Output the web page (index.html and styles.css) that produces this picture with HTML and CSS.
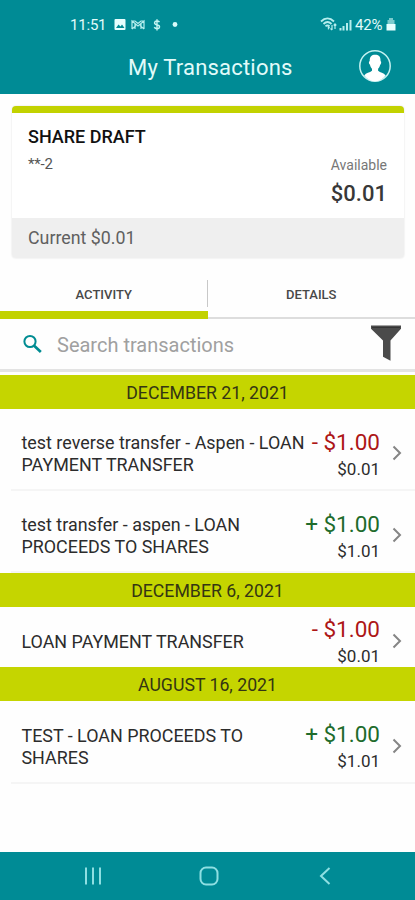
FILE: index.html
```html
<!DOCTYPE html>
<html lang="en">
<head>
<meta charset="utf-8">
<meta name="viewport" content="width=device-width, initial-scale=1">
<title>My Transactions</title>
<link rel="stylesheet" href="styles.css">
</head>
<body>
<header class="header">
  <div class="status">
    <span class="time">11:51</span>
    <svg class="notifications" width="66" height="14" viewBox="0 0 66 14" fill="none">
      <rect x="0.500" y="1" width="11" height="11" rx="1" fill="#e6ffff"/>
      <path d="M2 10l2.500-3.500 2 2 1.500-2 2.500 3.500z" fill="#008b95"/>
      <path d="M18 11V3l6 5 6-5v8M18 11l4-3.500M30 11l-4-3.500M18 3h3l3 2.500L27 3h3M21 5v6M27 5v6" stroke="#b5eeee" stroke-width="1.200"/>
      <path d="M45.500 4.200c-.6-.8-1.300-1.200-2.500-1.200-3 0-3.300 3.100-.5 3.700l1 .3c3 .7 2.500 3.700-.5 3.700-1.200 0-2.100-.5-2.800-1.400M43 1.200v11.300" stroke="#c5f5f3" stroke-width="1.400"/>
      <circle cx="61" cy="6.500" r="2.400" fill="#d8fcfa"/>
    </svg>
    <svg class="signal" width="33" height="16" viewBox="0 0 33 16" fill="none" stroke="#b5eeee">
      <path d="M1 4.500c4-4 9-4 13 0M3.500 7c2.500-2.500 5.500-2.500 8 0M5.500 9.300c1.200-1.200 2.800-1.200 4 0" stroke-width="1.800"/>
      <path d="M7.500 8l2.500 2.500-2 2.500z" fill="#b5eeee" stroke="none"/>
      <path d="M12 8v5M15 7v5M10.500 11.500l1.500 1.500M13.700 8.500L15 7l1.300 1.500" stroke-width="1.200"/>
      <path d="M20.500 11v2.500M23.500 9v4.500M27 6v7.500M30.500 3v10.500" stroke-width="2"/>
    </svg>
    <span class="percent">42%</span>
    <svg width="10" height="13" viewBox="0 0 10 13">
      <path d="M3 0h4v2h1.500v4h-7V2H3z" fill="#7acbcd"/>
      <path d="M.5 6h9v6.500h-9z" fill="#e8ffff"/>
    </svg>
  </div>
  <div class="titlebar">
    <h1>My Transactions</h1>
    <svg class="avatar" width="34" height="34" viewBox="0 0 34 34">
      <circle cx="17" cy="17" r="15.200" fill="none" stroke="#c4f2f1" stroke-width="1.500"/>
      <path d="M11.700 12.200C11.600 7.500 13.600 5.700 17.200 5.700s5.700 2 5.300 6.500c1.100.1.700 2.900-.3 3.500-.5 2-1.200 3.100-2.100 4v2.100c2.100 1.900 5.600 2 7.600 4.600-5.700 7.700-15.700 7.700-21.500 0 1.800-2.500 5.600-2.700 7.800-4.600v-2.100c-1-.9-1.700-2.100-2-4-1.200-.6-1.500-3.400-.3-3.500z" fill="#fff"/>
    </svg>
  </div>
</header>
<main>
  <section class="card">
    <div class="card-body">
      <div class="account"><h2>SHARE DRAFT</h2><p>**-2</p></div>
      <div class="available"><span>Available</span><strong>$0.01</strong></div>
    </div>
    <div class="card-foot">Current $0.01</div>
  </section>
  <nav class="tabs">
    <div class="tab active"><span>ACTIVITY</span></div>
    <div class="tab"><span>DETAILS</span></div>
  </nav>
  <div class="search">
    <svg width="20" height="20" viewBox="0 0 20 20" fill="none" stroke="#008c92">
      <circle cx="8" cy="7.500" r="5.600" stroke-width="2"/>
      <path d="M12.200 11.700l6.600 6.300" stroke-width="2.700"/>
    </svg>
    <span class="placeholder">Search transactions</span>
    <svg class="filter" width="32" height="36" viewBox="0 0 32 36">
      <path d="M1 .5h30v3.200L20.500 15.500v20.300l-7.500-4V15.500L1 3.700z" fill="#4b4b4b"/>
      <path d="M2 2.500h28" stroke="#343434"/>
    </svg>
  </div>
  <h3 class="date">DECEMBER 21, 2021</h3>
  <article class="row">
    <p class="desc">test reverse transfer - Aspen - LOAN<br>PAYMENT TRANSFER</p>
    <div class="money"><span class="amount debit">- $1.00</span><span class="balance">$0.01</span></div>
    <svg class="chevron" width="10" height="16" viewBox="0 0 10 16"><path d="M1.500 1.500L8 8l-6.500 6.500"/></svg>
  </article>
  <article class="row">
    <p class="desc">test transfer - aspen - LOAN<br>PROCEEDS TO SHARES</p>
    <div class="money"><span class="amount credit">+ $1.00</span><span class="balance">$1.01</span></div>
    <svg class="chevron" width="10" height="16" viewBox="0 0 10 16"><path d="M1.500 1.500L8 8l-6.500 6.500"/></svg>
  </article>
  <h3 class="date">DECEMBER 6, 2021</h3>
  <article class="row short">
    <p class="desc">LOAN PAYMENT TRANSFER</p>
    <div class="money"><span class="amount debit">- $1.00</span><span class="balance">$0.01</span></div>
    <svg class="chevron" width="10" height="16" viewBox="0 0 10 16"><path d="M1.500 1.500L8 8l-6.500 6.500"/></svg>
  </article>
  <h3 class="date">AUGUST 16, 2021</h3>
  <article class="row">
    <p class="desc">TEST - LOAN PROCEEDS TO<br>SHARES</p>
    <div class="money"><span class="amount credit">+ $1.00</span><span class="balance">$1.01</span></div>
    <svg class="chevron" width="10" height="16" viewBox="0 0 10 16"><path d="M1.500 1.500L8 8l-6.500 6.500"/></svg>
  </article>
</main>
<footer class="navbar">
  <svg width="18" height="20" viewBox="0 0 18 20"><path d="M2 1.500v17M9 1.500v17M16 1.500v17"/></svg>
  <svg class="home" width="20" height="20" viewBox="0 0 20 20"><rect x="1.500" y="1.500" width="17" height="17" rx="5.500"/></svg>
  <svg width="12" height="20" viewBox="0 0 12 20"><path d="M10.500 2L2 10l8.500 8"/></svg>
</footer>
</body>
</html>
```
FILE: styles.css
```css
* { box-sizing: border-box; }
body {
  margin: 0;
  height: 900px;
  display: flex;
  flex-direction: column;
  overflow: hidden;
  background: #fefefe;
  color: #2c2c2c;
  font-family: Roboto, "Liberation Sans", sans-serif;
}
h1, h2, h3, p { margin: 0; font-weight: 400; }
svg { flex: none; display: block; }
.header { height: 94px; flex: none; background: #008b95; color: #e2fbfa; }
.status {
  height: 40px;
  padding: 9px 19px 0 70px;
  display: flex;
  align-items: center;
  font-size: 15px;
}
.time { width: 44px; letter-spacing: -.2px; }
.signal { margin-left: auto; margin-right: 2px; }
.percent { width: 31px; letter-spacing: -.2px; }
.titlebar {
  height: 54px;
  padding: 0 23px 0 128px;
  display: flex;
  align-items: center;
  justify-content: space-between;
}
.titlebar h1 { font-size: 22px; letter-spacing: .2px; }
.titlebar .avatar { margin-top: -2px; }
main { flex: 1; }
.card {
  margin: 12px 11px 0 12px;
  height: 152px;
  border-radius: 4px;
  border-top: 7px solid #c2d200;
  background: #fff;
  box-shadow: 0 0 2px #ddd;
  overflow: hidden;
}
.card-body {
  height: 105px;
  padding: 13px 17px 0 16px;
  display: flex;
  justify-content: space-between;
}
.card h2 { font-size: 18px; line-height: 22px; font-weight: 500; color: #111; }
.card p { margin-top: 7px; font-size: 15px; line-height: 18px; letter-spacing: -.2px; color: #555; }
.available {
  padding-top: 30px;
  display: flex;
  flex-direction: column;
  align-items: flex-end;
  color: #777;
  font-size: 14px;
  line-height: 18px;
}
.available strong { margin-top: 7px; font-size: 22px; line-height: 26px; font-weight: 500; color: #383838; }
.card-foot {
  height: 40px;
  padding-left: 16px;
  background: #efefef;
  color: #606060;
  font-size: 17.8px;
  line-height: 40px;
}
.tabs { height: 61px; padding-top: 12px; display: flex; border-bottom: 2px solid #ddd; }
.tab {
  flex: 1;
  height: 49px;
  display: flex;
  align-items: center;
  justify-content: center;
  font-size: 13px;
  font-weight: 500;
  color: #484848;
}
.active {
  border-bottom: 8px solid #c2d200;
  padding-top: 8px;
  background: linear-gradient(#c8c8c8, #c8c8c8) right 10px / 1px 27px no-repeat;
}
.search {
  height: 53px;
  padding: 0 13px 0 22px;
  display: flex;
  align-items: center;
  border-bottom: 3px solid #e3e3e3;
}
.placeholder { margin: 2px 0 0 15px; font-size: 20px; color: #a0a0a0; }
.filter { margin-left: auto; margin-top: -2px; }
.search + .date { margin-top: 3px; }
.date {
  height: 34px;
  background: #c5d500;
  text-align: center;
  color: #343513;
  font-size: 17.7px;
  line-height: 36px;
}
.row {
  height: 82px;
  padding: 8px 13px 0 21.5px;
  display: flex;
  align-items: center;
  background: linear-gradient(#f5f5f5, #f5f5f5) 11px bottom / 100% 2px no-repeat;
}
.desc { flex: 1; font-size: 17.9px; line-height: 22px; white-space: nowrap; }
.money { padding-top: 4px; display: flex; flex-direction: column; align-items: flex-end; }
.amount { margin-top: -1px; font-size: 22.5px; line-height: 26px; }
.balance { font-size: 17px; line-height: 28px; }
.debit { color: #ad1616; }
.credit { color: #206b2b; }
.chevron { margin: -2px 0 0 12px; fill: none; stroke: #858585; stroke-width: 2; }
.short { height: 60px; padding-top: 8px; background: none; }
.short .desc { padding-top: 2px; }
.short .chevron { margin-top: -1px; }
.row:last-child { height: 83px; }
.navbar {
  height: 48px;
  flex: none;
  padding: 0 84px;
  display: flex;
  align-items: center;
  justify-content: space-between;
  background: #008b95;
}
.navbar svg { fill: none; stroke: #8edfe2; stroke-width: 2; }
.navbar .home { margin-right: 4px; }
```
